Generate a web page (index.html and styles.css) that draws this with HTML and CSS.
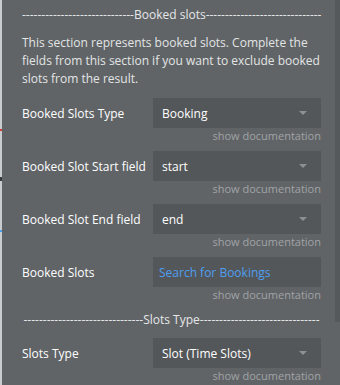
FILE: index.html
```html
<!DOCTYPE html>
<html lang="en">
<head>
    <meta charset="UTF-8">
    <meta name="viewport" content="width=device-width, initial-scale=1.0">
    <title>Booked slots</title>
    <link rel="stylesheet" href="styles.css">
</head>
<body>
    <div class="edge">
        <span class="mark mark-red"></span>
        <span class="mark mark-dark"></span>
        <span class="mark mark-blue"></span>
    </div>
    <div class="panel">
        <div class="section-title">-----------------------------Booked slots------------------------------</div>
        <p class="description">This section represents booked slots. Complete the fields from this section if you want to exclude booked slots from the result.</p>

        <div class="field">
            <div class="field-row">
                <label>Booked Slots Type</label>
                <div class="dropdown"><span>Booking</span><span class="arrow"></span></div>
            </div>
            <div class="doc">show documentation</div>
        </div>
        <div class="field">
            <div class="field-row">
                <label>Booked Slot Start field</label>
                <div class="dropdown"><span>start</span><span class="arrow"></span></div>
            </div>
            <div class="doc">show documentation</div>
        </div>
        <div class="field">
            <div class="field-row">
                <label>Booked Slot End field</label>
                <div class="dropdown"><span>end</span><span class="arrow"></span></div>
            </div>
            <div class="doc">show documentation</div>
        </div>
        <div class="field">
            <div class="field-row">
                <label>Booked Slots</label>
                <div class="dropdown"><span class="expression">Search for Bookings</span></div>
            </div>
            <div class="doc">show documentation</div>
        </div>

        <div class="section-title section-second">-------------------------------Slots Type-------------------------------</div>

        <div class="field">
            <div class="field-row">
                <label>Slots Type</label>
                <div class="dropdown"><span>Slot (Time Slots)</span><span class="arrow"></span></div>
            </div>
            <div class="doc">show documentation</div>
        </div>
    </div>
    <div class="scrollbar"></div>
</body>
</html>
```

FILE: styles.css
```css
* {
    box-sizing: border-box;
    font-family: "Open Sans", "Noto Sans", sans-serif;
}
html, body {
    height: 100%;
}
body {
    margin: 0;
    display: flex;
    background-color: #606467;
    overflow: hidden;
}
.edge {
    width: 2px;
    flex-shrink: 0;
    background-color: #c9ccce;
    position: relative;
}
.mark {
    position: absolute;
    left: 0;
    width: 2px;
    height: 2px;
}
.mark-red { top: 129px; background-color: #d63b3b; }
.mark-dark { top: 177px; height: 4px; background-color: #3a3d40; }
.mark-blue { top: 230px; background-color: #4a9ff5; }
.panel {
    flex: 1 1 0;
    min-width: 0;
    padding: 6px 14px 0 20px;
    color: #fff;
}
.section-title {
    height: 18px;
    line-height: 18px;
    font-size: 12px;
    color: #e6e7e8;
    text-align: center;
    white-space: nowrap;
}
.section-second {
    margin-top: 8px;
    margin-bottom: 9px;
}
.description {
    margin: 10px 0 10px;
    font-size: 12px;
    line-height: 18px;
    color: #e3e4e5;
}
.field {
    margin-bottom: 7px;
}
.field-row {
    display: flex;
    align-items: center;
    height: 30px;
}
.field-row label {
    width: 131px;
    flex-shrink: 0;
    font-size: 12px;
    color: #fff;
}
.dropdown {
    flex: 1 1 0;
    min-width: 0;
    height: 30px;
    display: flex;
    align-items: center;
    justify-content: space-between;
    padding: 0 14px 0 9px;
    background-color: #535759;
    font-size: 12px;
    color: #fff;
}
.expression {
    color: #4f9ef0;
    margin-left: -3px;
}
.arrow {
    width: 0;
    height: 0;
    border-left: 4px solid transparent;
    border-right: 4px solid transparent;
    border-top: 4px solid #8d9194;
}
.doc {
    text-align: right;
    font-size: 11px;
    line-height: 16px;
    color: #a0a3a6;
}
.scrollbar {
    width: 5px;
    height: 322px;
    flex-shrink: 0;
    background-color: #55595c;
}
```
